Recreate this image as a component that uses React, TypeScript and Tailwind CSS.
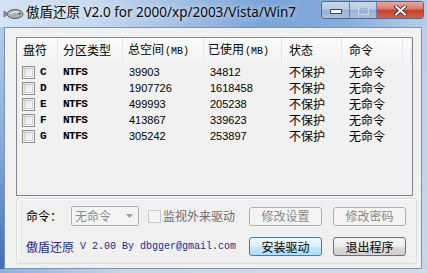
import React from "react";

const rows = [
  ["C", "NTFS", "39903", "34812"],
  ["D", "NTFS", "1907726", "1618458"],
  ["E", "NTFS", "499993", "205238"],
  ["F", "NTFS", "413867", "339623"],
  ["G", "NTFS", "305242", "253897"],
];

const cols = "grid grid-cols-[41px_65px_81px_78px_60px_61px_9px]";

function Check({ disabled }: { disabled?: boolean }) {
  return (
    <div
      className={
        disabled
          ? "w-[13px] h-[13px] border border-[#c8c8c8] bg-[#f4f4f4]"
          : "w-[13px] h-[13px] border border-[#8e8f8f] bg-[linear-gradient(135deg,#dcdcdc_0%,#f4f4f4_60%,#ffffff_100%)] p-[1px]"
      }
    >
      {!disabled && <div className="w-full h-full border border-[#d0d0d0] bg-[linear-gradient(135deg,#e4e4e4,#fbfbfb)]" />}
    </div>
  );
}

function Btn({ label, kind }: { label: string; kind: "disabled" | "default" | "normal" }) {
  const cls =
    kind === "disabled"
      ? "border-[#adb2b5] bg-[#f4f4f4] text-[#8a8a8a]"
      : kind === "default"
      ? "border-[#3c7fb1] bg-[linear-gradient(180deg,#eef8fd_0%,#dcf0fb_50%,#c6e6f8_51%,#b4dcf3_100%)] text-black"
      : "border-[#707070] bg-[linear-gradient(180deg,#f4f4f4_0%,#ececec_50%,#dddddd_51%,#cfcfcf_100%)] text-black";
  return (
    <div
      className={`w-[73px] h-[19px] rounded-[3px] border flex items-center justify-center text-[12px] leading-[16px] font-['Noto_Sans_CJK_SC',sans-serif] ${cls}`}
    >
      {label}
    </div>
  );
}

export default function App() {
  return (
    <div className="w-[427px] h-[273px] overflow-hidden flex flex-col bg-[linear-gradient(180deg,#c4d8ef_0%,#b9cfea_60%,#c9d8ea_100%)] text-black font-['Noto_Sans_CJK_SC',sans-serif] text-[12px]">
      {/* Title bar */}
      <div className="h-[27px] flex items-start bg-[linear-gradient(90deg,#d4e3f4_0%,#c6d9ef_22%,#9cbbe2_45%,#7aa3d7_62%,#86acdb_80%,#b6cdea_100%)]">
        <div className="w-[26px] h-[27px] flex items-center justify-center pl-[1px]">
          <svg width="21" height="12" viewBox="0 0 21 12">
            <path d="M1 3 L5 6 L1 9 Z" fill="#8f98a3" stroke="#5a626c" strokeWidth="0.8" />
            <ellipse cx="12" cy="6" rx="8" ry="4.5" fill="#a7afb8" stroke="#59616b" strokeWidth="1" />
            <path d="M7 6 Q12 2.5 17 5" stroke="#e8ecf0" strokeWidth="1.2" fill="none" />
            <circle cx="16.5" cy="5.5" r="1" fill="#2f353c" />
          </svg>
        </div>
        <div className="mt-[4px] text-[13.5px] leading-[17px] font-['Noto_Sans','Noto_Sans_CJK_SC',sans-serif] text-[#0c0c0c] [text-shadow:0_0_6px_rgba(255,255,255,0.9)]">
          傲盾还原 V2.0 for 2000/xp/2003/Vista/Win7
        </div>
        <div className="ml-auto mr-[3px] mt-[1px] flex h-[18px] rounded-[3px] border border-[#51688c] overflow-hidden">
          <div className="w-[28px] h-full flex items-end justify-center pb-[4px] border-r border-[#6b82a4] bg-[linear-gradient(180deg,#c9d8ea_0%,#b7cbe3_45%,#98b1d2_50%,#a9c0dd_100%)]">
            <svg width="12" height="5" viewBox="0 0 12 5">
              <rect x="0.5" y="0.5" width="11" height="4" fill="#ffffff" stroke="#3a4a62" strokeWidth="1" />
            </svg>
          </div>
          <div className="w-[27px] h-full flex items-center justify-center border-r border-[#6b82a4] bg-[linear-gradient(180deg,#c9d8ea_0%,#b7cbe3_45%,#98b1d2_50%,#a9c0dd_100%)]">
            <svg width="11" height="10" viewBox="0 0 11 10">
              <rect x="0.5" y="0.5" width="10" height="9" fill="none" stroke="#c8d6ea" strokeWidth="1" />
              <rect x="2.5" y="3.5" width="6" height="4" fill="none" stroke="#9db3d2" strokeWidth="1" />
            </svg>
          </div>
          <div className="w-[46px] h-full flex items-center justify-center bg-[linear-gradient(180deg,#e8a99f_0%,#d77a6a_45%,#c2402d_50%,#d4604a_100%)]">
            <svg width="13" height="11" viewBox="0 0 13 11">
              <path d="M2 1.5 L11 9.5 M11 1.5 L2 9.5" stroke="#3a2a2a" strokeWidth="3.6" strokeLinecap="square" />
              <path d="M2 1.5 L11 9.5 M11 1.5 L2 9.5" stroke="#ffffff" strokeWidth="2" strokeLinecap="square" />
            </svg>
          </div>
        </div>
      </div>

      {/* Body with side frames */}
      <div className="flex h-[242px]">
        <div className="w-[4px] bg-[linear-gradient(180deg,#b4cbe8_0%,#86a9d8_50%,#3f6db5_100%)]" />
        <div className="w-[418px] border border-[#7b93b5] bg-[#f0f0f0] pl-[11px] pt-[9px] flex flex-col">
          {/* List view */}
          <div className="w-[397px] h-[159px] border border-[#828790] bg-[#f1f1f1] flex flex-col">
            <div className={`${cols} h-[24px] bg-[linear-gradient(180deg,#fbfbfb,#f3f3f3)]`}>
              {[
                ["盘符", "pl-[6px]", ""],
                ["分区类型", "pl-[5px]", ""],
                ["总空间", "pl-[5px]", "(MB)"],
                ["已使用", "pl-[4px]", "(MB)"],
                ["状态", "pl-[7px]", ""],
                ["命令", "pl-[7px]", ""],
                ["", "", ""],
              ].map(([t, p, mb], i) => (
                <div key={i} className={`flex items-center h-full border-r border-[#e2e5e9] ${p}`}>
                  <span className="leading-[16px] whitespace-nowrap">
                    {t}
                    {mb && (
                      <span className="font-['Liberation_Mono',monospace] text-[10px] ml-[1px]">{mb}</span>
                    )}
                  </span>
                </div>
              ))}
            </div>
            <div className="pt-[2px] flex flex-col">
              {rows.map((r) => (
                <div key={r[0]} className={`${cols} h-[16px] items-center`}>
                  <div className="flex items-center pl-[5px] gap-[5px]">
                    <Check />
                    <span className="font-['Liberation_Mono',monospace] font-bold text-[11px] leading-[16px]">{r[0]}</span>
                  </div>
                  <div className="pl-[5px] font-['Liberation_Mono',monospace] font-bold text-[11px] leading-[16px] tracking-[-0.5px]">{r[1]}</div>
                  <div className="pl-[6px] font-['Liberation_Sans',sans-serif] text-[11px] leading-[16px]">{r[2]}</div>
                  <div className="pl-[6px] font-['Liberation_Sans',sans-serif] text-[11px] leading-[16px]">{r[3]}</div>
                  <div className="pl-[7px] leading-[16px]">不保护</div>
                  <div className="pl-[7px] leading-[16px]">无命令</div>
                  <div />
                </div>
              ))}
            </div>
          </div>

          {/* Group box */}
          <div className="mt-[2px] w-[401px] h-[66px] border border-[#d5dfe5] rounded-[3px] shadow-[inset_1px_1px_0_#ffffff] pl-[9px] pt-[7px] flex flex-col">
            <div className="flex items-center h-[20px]">
              <div className="w-[45px] leading-[16px]">命令：</div>
              <div className="w-[68px] h-[20px] border border-[#adb2b5] rounded-[2px] bg-[#f4f4f4] flex items-center pl-[3px] text-[#8a8a8a]">
                <span className="leading-[16px]">无命令</span>
                <svg className="ml-auto mr-[5px]" width="7" height="4" viewBox="0 0 7 4">
                  <path d="M0 0 L7 0 L3.5 4 Z" fill="#a0a0a0" />
                </svg>
              </div>
              <div className="ml-[9px] flex items-center w-[101px]">
                <Check disabled />
                <span className="ml-[2px] leading-[16px] text-[#6d6d6d]">监视外来驱动</span>
              </div>
              <Btn label="修改设置" kind="disabled" />
              <div className="w-[11px]" />
              <Btn label="修改密码" kind="disabled" />
            </div>
            <div className="flex items-center h-[19px] mt-[11px]">
              <div className="w-[223px] flex items-center text-[#1a2a8e]">
                <span className="leading-[16px]">傲盾还原</span>
                <span className="font-['Liberation_Mono',monospace] text-[10px] leading-[16px] whitespace-pre"> V 2.00 By dbgger@gmail.com</span>
              </div>
              <Btn label="安装驱动" kind="default" />
              <div className="w-[11px]" />
              <Btn label="退出程序" kind="normal" />
            </div>
          </div>
        </div>
        <div className="w-[5px] bg-[linear-gradient(180deg,#b9cfea_0%,#c7d7ea_100%)]" />
      </div>
      <div className="h-[4px] bg-[linear-gradient(90deg,#8fb0dc_0%,#c9d7e8_30%,#d2dce8_100%)]" />
    </div>
  );
}
